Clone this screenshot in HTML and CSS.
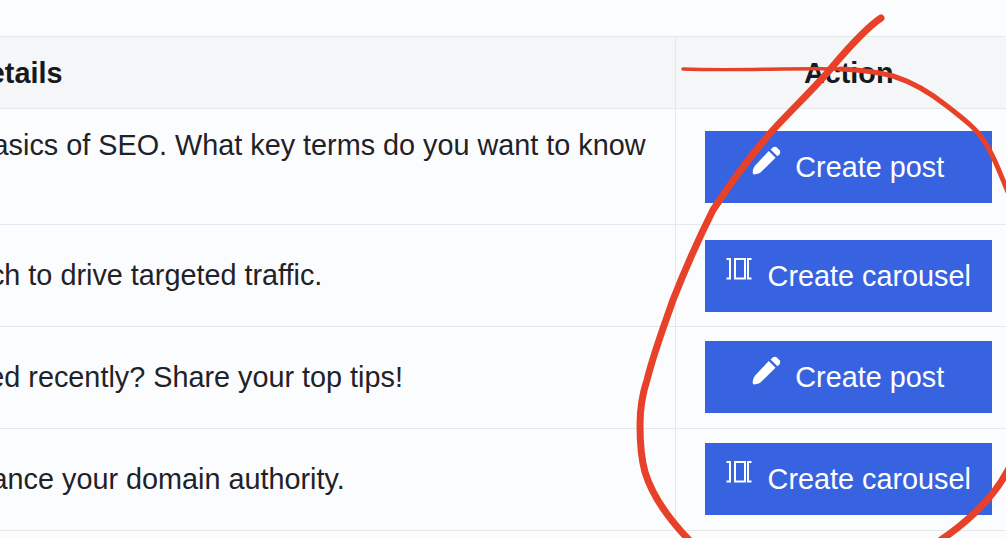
FILE: index.html
```html
<!DOCTYPE html>
<html lang="en">
<head>
    <meta charset="UTF-8">
    <meta name="viewport" content="width=device-width, initial-scale=1.0">
    <title>Content ideas</title>
    <link rel="stylesheet" href="styles.css">
</head>
<body>
    <table class="ideas">
        <thead>
            <tr>
                <th class="col-details">Details</th>
                <th class="col-action">Action</th>
            </tr>
        </thead>
        <tbody>
            <tr>
                <td class="details">Write a piece on the basics of SEO. What key terms do you want to know more?</td>
                <td class="action">
                    <a class="btn" href="#">
                        <svg class="icon" width="29" height="29" viewBox="0 0 32 32"><use href="#pencil"/></svg>
                        Create post
                    </a>
                </td>
            </tr>
            <tr>
                <td class="details">Get guest post outreach to drive targeted traffic.</td>
                <td class="action">
                    <a class="btn btn-wide" href="#">
                        <svg class="icon" width="26" height="22" viewBox="0 0 26 22"><use href="#carousel"/></svg>
                        Create carousel
                    </a>
                </td>
            </tr>
            <tr>
                <td class="details">What tool have we used recently? Share your top tips!</td>
                <td class="action">
                    <a class="btn" href="#">
                        <svg class="icon" width="29" height="29" viewBox="0 0 32 32"><use href="#pencil"/></svg>
                        Create post
                    </a>
                </td>
            </tr>
            <tr>
                <td class="details">Build backlinks to enhance your domain authority.</td>
                <td class="action">
                    <a class="btn btn-wide" href="#">
                        <svg class="icon" width="26" height="22" viewBox="0 0 26 22"><use href="#carousel"/></svg>
                        Create carousel
                    </a>
                </td>
            </tr>
        </tbody>
    </table>

    <!-- Icon definitions -->
    <svg class="defs" width="0" height="0">
        <defs>
            <g id="pencil" fill="#fff">
                <path d="M18.5 5.5 L26 13 L9 29.5 Q7.5 30.5 5 31 L2.5 31.5 Q0.5 31.5 0.8 29 L1.2 26 Q1.8 23.5 3.5 21.5 Z"/>
                <path d="M20.5 3.8 L23 1.6 Q25.2 0 27.3 1.6 L30.5 4.8 Q32 7 30.4 9 L28 11.2 Z"/>
            </g>
            <g id="carousel" fill="none" stroke="#fff" stroke-width="2">
                <path d="M0.5 1 H4 V20.5 H0.5"/>
                <rect x="9" y="1" width="10" height="19.5"/>
                <path d="M25.5 1 H22 V20.5 H25.5"/>
            </g>
        </defs>
    </svg>

    <!-- Hand drawn marks on top of the screenshot -->
    <svg class="marks" width="1006" height="538" viewBox="0 0 1006 538">
        <path class="mark-loop" d="M881 18 C866 28 850 46 833 66 C815 88 793 108 773 130 C750 156 730 184 713 210 C698 240 684 272 673 300 C664 326 654 352 647 380 C641 398 640 410 640 425 C640 445 641 458 645 472 C651 492 667 517 689 540"/>
        <path class="mark-thin" d="M683 69 C730 71 790 68 840 69"/>
        <path class="mark-line" d="M840 69 C860 70 878 72 893 76 C915 83 932 94 947 106 C965 120 975 128 982 138 C992 152 998 168 1008 192"/>
        <path class="mark-loop" d="M1008 470 C995 495 970 520 941 540"/>
    </svg>
</body>
</html>
```

FILE: styles.css
```css
body {
    margin: 0;
    height: 538px;
    overflow: hidden;
    background-color: #fbfcfe;
    font-family: "Liberation Sans", Arial, sans-serif;
    color: #1f2226;
}

.ideas {
    margin: 36px 0 0 -287px;
    width: 1309px;
    table-layout: fixed;
    border-collapse: collapse;
    font-size: 28.8px;
    line-height: 42px;
}

.ideas th {
    height: 72px;
    box-sizing: border-box;
    padding: 0;
    background-color: #f5f6f7;
    border-top: 1px solid #e6e7e9;
    border-bottom: 1px solid #e6e7e9;
    font-weight: bold;
    color: #17191c;
}

.ideas .col-details {
    width: 962px;
    padding-left: 255px;
    text-align: left;
}

.col-action {
    text-align: center;
    border-left: 1px solid #e6e7e9;
}

.ideas td {
    border-bottom: 1px solid #e6e7e9;
    vertical-align: middle;
}

.details {
    padding: 15px 24px 16px 0;
}

.action {
    padding: 15px 30px 14px 29px;
    border-left: 1px solid #e6e7e9;
}

tr:nth-child(n+3) .action {
    padding-top: 14px;
    padding-bottom: 15px;
}

.btn {
    display: flex;
    justify-content: center;
    align-items: center;
    gap: 14px;
    height: 72px;
    background-color: #3763e0;
    color: #fff;
    text-decoration: none;
}

.btn-wide {
    gap: 16px;
}

.icon {
    margin-top: -13px;
}

.btn-wide .icon {
    margin-top: -14px;
}

.defs {
    position: absolute;
}

/* Red pen strokes */
.marks {
    position: absolute;
    left: 0;
    top: 0;
    fill: none;
    stroke: #e8412a;
    stroke-linecap: round;
}

.mark-loop {
    stroke-width: 7;
}

.mark-line {
    stroke-width: 5;
}

.mark-thin {
    stroke-width: 3.5;
}
```
